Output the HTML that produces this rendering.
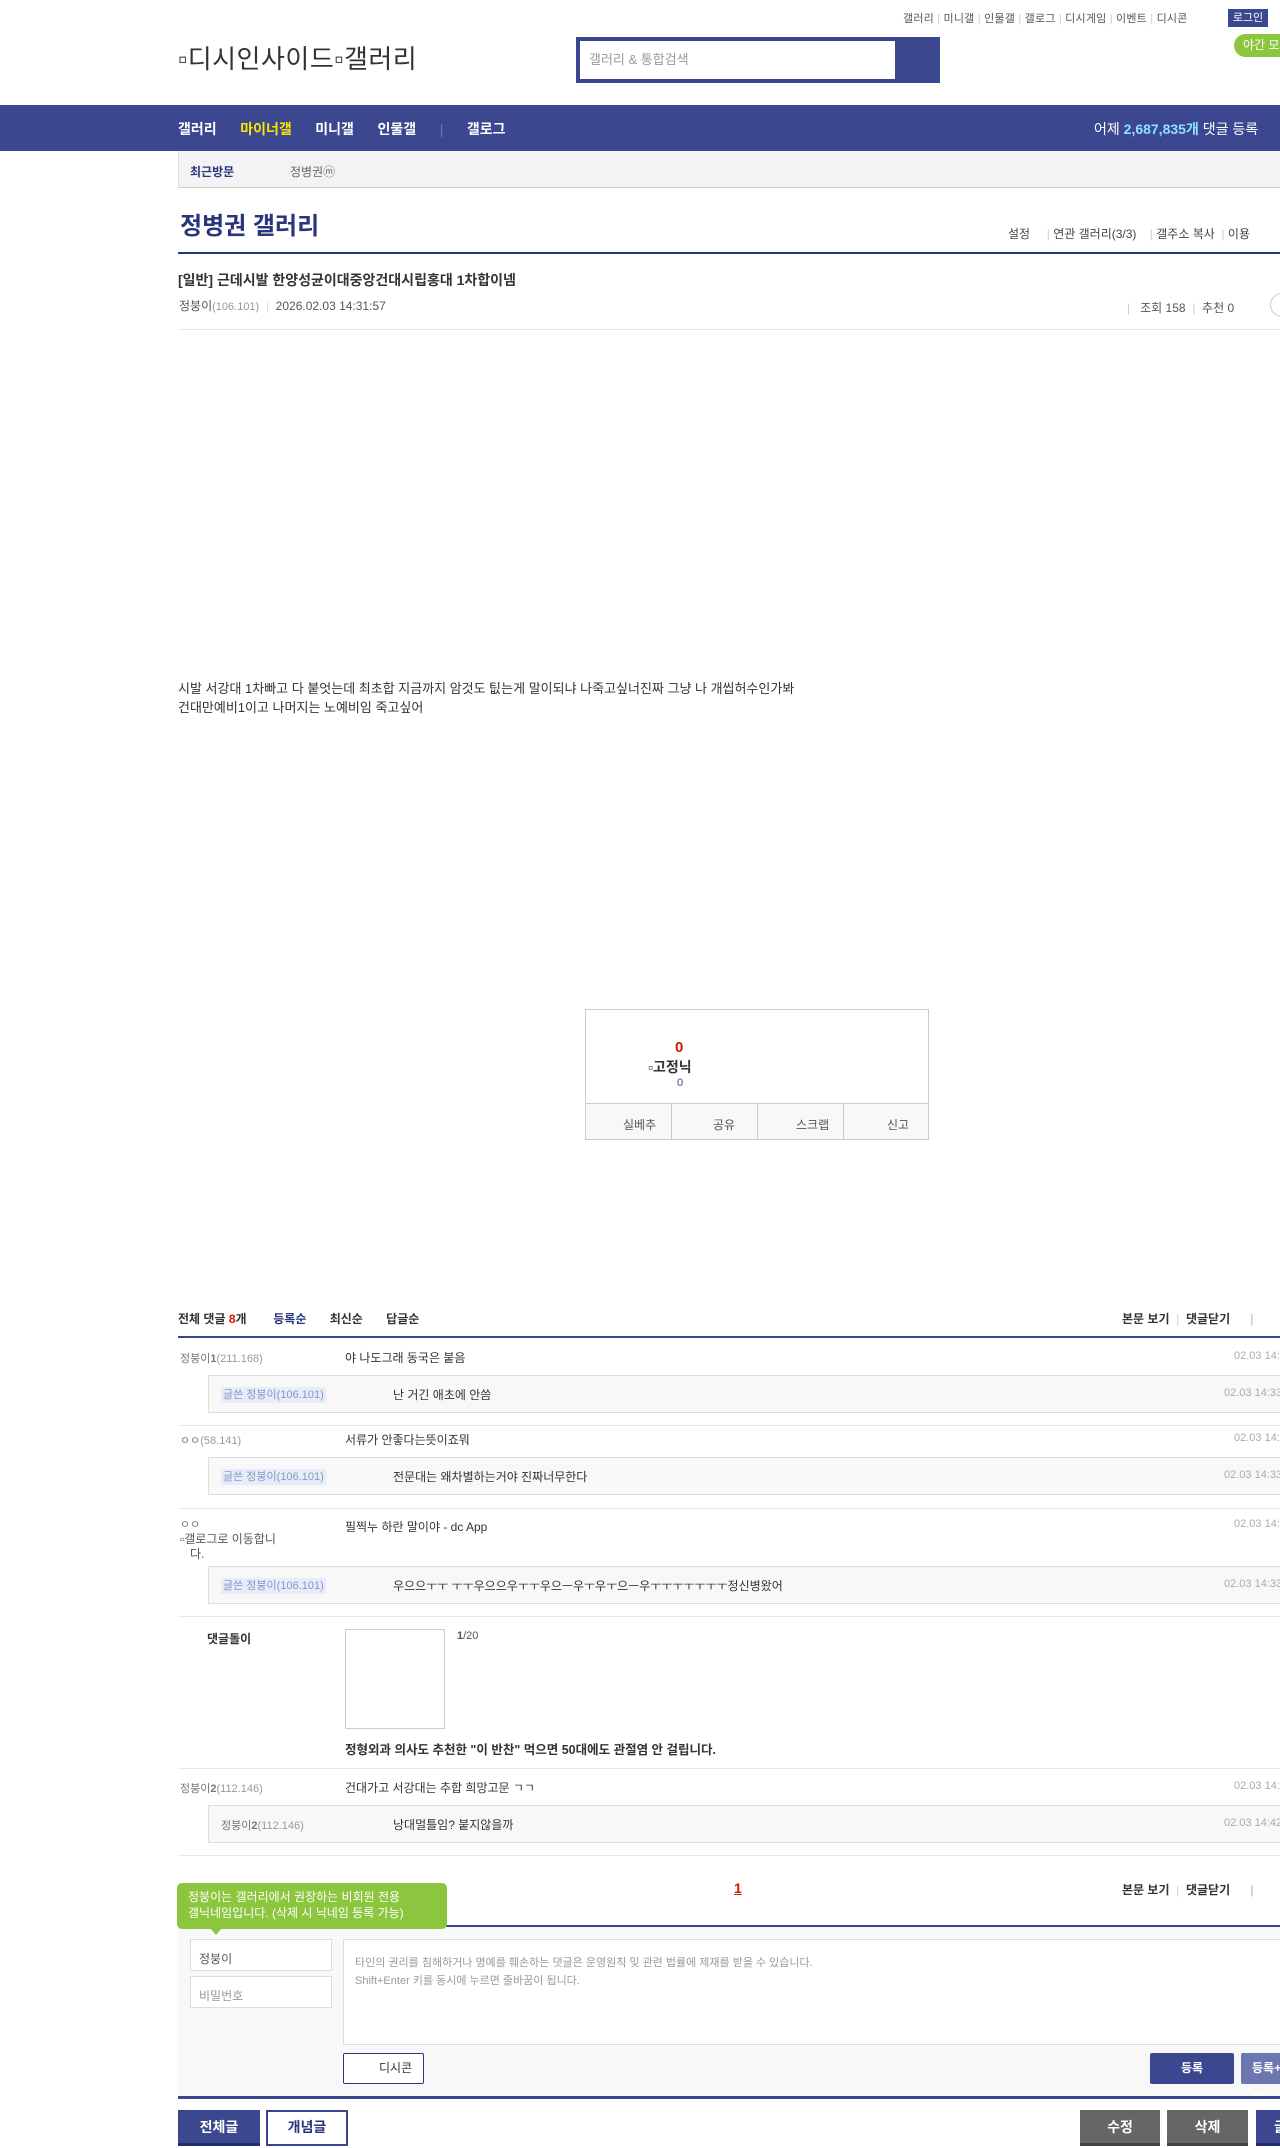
<!DOCTYPE html>
<html><head><meta charset="utf-8"><style>
*{margin:0;padding:0;box-sizing:border-box}
body{width:1280px;height:2148px;position:relative;overflow:hidden;background:#fff;font-family:"Liberation Sans","Noto Sans CJK KR",sans-serif;color:#333;font-size:12px}
.a{position:absolute;white-space:nowrap}
.g{color:#999}
.hr{position:absolute;height:1px;background:#e8e8e8;left:178px;width:1102px}
.rbox{position:absolute;left:208px;width:1072px;height:38px;background:#f8f8f9;border:1px solid #ddd;border-right:none}
.tag{background:#e6ecfa;color:#8a96bd;font-size:11px;padding:2px 2px}
.date{color:#aaa;font-size:11px}
.btn{position:absolute;height:36px;color:#fff;font-weight:bold;font-size:14px;text-align:center;line-height:34px}
</style></head><body>
<!-- top links -->
<div class="a" style="left:903px;top:10px;font-size:11px;color:#555;letter-spacing:0.2px">갤러리 <span style="color:#ccc">|</span> 미니갤 <span style="color:#ccc">|</span> 인물갤 <span style="color:#ccc">|</span> 갤로그 <span style="color:#ccc">|</span> 디시게임 <span style="color:#ccc">|</span> 이벤트 <span style="color:#ccc">|</span> 디시콘</div>
<div class="a" style="left:1228px;top:9px;width:40px;height:18px;background:#3b4890;color:#fff;font-size:11px;text-align:center;line-height:18px">로그인</div>
<div class="a" style="left:1234px;top:34px;width:60px;height:23px;background:#8cc63e;border-radius:12px;color:#fff;font-size:12px;line-height:23px;padding-left:9px">야간 모드</div>
<div class="a" style="left:178px;top:39px;font-size:26px;color:#333;letter-spacing:0.5px">▫디시인사이드▫갤러리</div>
<div class="a" style="left:576px;top:37px;width:364px;height:46px;background:#3b4890"></div>
<div class="a" style="left:580px;top:41px;width:315px;height:38px;background:#fff;color:#999;font-size:13px;line-height:38px;padding-left:9px">갤러리 &amp; 통합검색</div>
<!-- nav -->
<div class="a" style="left:0;top:105px;width:1280px;height:46px;background:#3b4890"></div>
<div class="a" style="left:178px;top:119px;font-size:14px;font-weight:bold;color:#fff;word-spacing:2px">갤러리 &nbsp;&nbsp;&nbsp;<span style="color:#ffe400">마이너갤</span>&nbsp;&nbsp;&nbsp; 미니갤 &nbsp;&nbsp;&nbsp;인물갤 &nbsp;&nbsp;&nbsp;<span style="color:#6a76b8;font-weight:normal">|</span>&nbsp;&nbsp;&nbsp; 갤로그</div>
<div class="a" style="left:1094px;top:119px;font-size:14px;color:#fff">어제 <b style="color:#8ee0ff">2,687,835개</b> 댓글 등록</div>
<!-- sub bar -->
<div class="a" style="left:178px;top:151px;width:1102px;height:37px;background:#f3f3f3;border-left:1px solid #ddd;border-bottom:1px solid #ccc"></div>
<div class="a" style="left:190px;top:163px;font-size:12px;font-weight:bold;color:#29367c">최근방문</div>
<div class="a" style="left:290px;top:163px;font-size:12px;color:#666">정병권ⓜ</div>
<!-- gallery title -->
<div class="a" style="left:180px;top:206px;font-size:24px;color:#29367c;font-weight:bold">정병권 갤러리</div>
<div class="a" style="left:1008px;top:225px;font-size:12px;color:#444">설정 &nbsp;&nbsp;&nbsp;&nbsp;<span style="color:#ccc">|</span> 연관 갤러리(3/3) &nbsp;&nbsp;&nbsp;<span style="color:#ccc">|</span> 갤주소 복사 &nbsp;<span style="color:#ccc">|</span> 이용</div>
<div class="a" style="left:178px;top:252px;width:1102px;height:2px;background:#29367c"></div>
<div class="a" style="left:178px;top:270px;font-size:14px;font-weight:bold;color:#333">[일반] 근데시발 한양성균이대중앙건대시립홍대 1차합이넴</div>
<div class="a" style="left:179px;top:297px;font-size:12px;color:#555">정붕이<span class="g" style="font-size:11px">(106.101)</span> &nbsp;<span style="color:#ddd">|</span>&nbsp; 2026.02.03 14:31:57</div>
<div class="a" style="left:1127px;top:299px;font-size:12px;color:#555"><span style="color:#ccc">|</span> &nbsp;&nbsp;조회 158 &nbsp;<span style="color:#ccc">|</span> &nbsp;추천 0</div>
<div class="a" style="left:1270px;top:293px;width:24px;height:24px;border:1px solid #ccc;border-radius:12px"></div>
<div class="hr" style="top:329px"></div>
<!-- body -->
<div class="a" style="left:178px;top:679px;font-size:13px;line-height:19px;color:#333">시발 서강대 1차빠고 다 붙엇는데 최초합 지금까지 암것도 팂는게 말이되냐 나죽고싶너진짜 그냥 나 개씹허수인가봐<br>건대만예비1이고 나머지는 노예비임 죽고싶어</div>
<!-- recommend box -->
<div class="a" style="left:585px;top:1009px;width:344px;height:131px;border:1px solid #ccc"></div>
<div class="a" style="left:585px;top:1103px;width:344px;height:37px;background:#f8f8f8;border:1px solid #ccc"></div>
<div class="a" style="left:671px;top:1103px;width:1px;height:37px;background:#ccc"></div>
<div class="a" style="left:757px;top:1103px;width:1px;height:37px;background:#ccc"></div>
<div class="a" style="left:843px;top:1103px;width:1px;height:37px;background:#ccc"></div>
<div class="a" style="left:623px;top:1116px;font-size:12px;color:#555">실베추</div>
<div class="a" style="left:713px;top:1116px;font-size:12px;color:#555">공유</div>
<div class="a" style="left:796px;top:1116px;font-size:12px;color:#555">스크랩</div>
<div class="a" style="left:887px;top:1116px;font-size:12px;color:#555">신고</div>
<div class="a" style="left:675px;top:1039px;font-size:15px;font-weight:bold;color:#d31900">0</div>
<div class="a" style="left:648px;top:1057px;font-size:14px;font-weight:bold;color:#333">▫고정닉</div>
<div class="a" style="left:677px;top:1077px;font-size:11px;color:#3b4890">0</div>
<!-- comments header -->
<div class="a" style="left:178px;top:1310px;font-size:12px;font-weight:bold;color:#333">전체 댓글 <span style="color:#d31900">8</span>개 &nbsp;&nbsp;&nbsp;&nbsp;&nbsp;&nbsp;&nbsp;<span style="color:#29367c">등록순</span> &nbsp;&nbsp;&nbsp;&nbsp;&nbsp;&nbsp;최신순 &nbsp;&nbsp;&nbsp;&nbsp;&nbsp;&nbsp;답글순</div>
<div class="a" style="left:1122px;top:1310px;font-size:12px;font-weight:bold;color:#333">본문 보기 &nbsp;<span style="color:#ccc;font-weight:normal">|</span> &nbsp;댓글닫기 &nbsp;&nbsp;&nbsp;&nbsp;&nbsp;<span style="color:#ccc">|</span></div>
<div class="a" style="left:178px;top:1336px;width:1102px;height:2px;background:#3b4890"></div>

<div class="a" style="left:180px;top:1350px;font-size:11px;color:#777">정붕이<b>1</b><span class="g">(211.168)</span></div>
<div class="a" style="left:345px;top:1349px;font-size:12px">야 나도그래 동국은 붙음</div>
<div class="a date" style="left:1234px;top:1350px">02.03 14:31</div>
<div class="rbox" style="top:1375px"></div>
<div class="a" style="left:221px;top:1386px"><span class="tag">글쓴 정붕이(106.101)</span></div>
<div class="a" style="left:393px;top:1386px;font-size:12px">난 거긴 애초에 안씀</div>
<div class="a date" style="left:1224px;top:1387px">02.03 14:33</div>
<div class="hr" style="top:1425px"></div>

<div class="a" style="left:180px;top:1432px;font-size:11px;color:#777">ㅇㅇ<span class="g">(58.141)</span></div>
<div class="a" style="left:345px;top:1431px;font-size:12px">서류가 안좋다는뜻이죠뭐</div>
<div class="a date" style="left:1234px;top:1432px">02.03 14:31</div>
<div class="rbox" style="top:1457px"></div>
<div class="a" style="left:221px;top:1468px"><span class="tag">글쓴 정붕이(106.101)</span></div>
<div class="a" style="left:393px;top:1468px;font-size:12px">전문대는 왜차별하는거야 진짜너무한다</div>
<div class="a date" style="left:1224px;top:1469px">02.03 14:33</div>
<div class="hr" style="top:1508px"></div>

<div class="a" style="left:180px;top:1518px;font-size:11px;color:#777;line-height:14px">ㅇㅇ<br><span style="color:#555;font-size:12px">▫갤로그로 이동합니<br>&nbsp;&nbsp;&nbsp;다.</span></div>
<div class="a" style="left:345px;top:1518px;font-size:12px">필찍누 하란 말이야 - dc App</div>
<div class="a date" style="left:1234px;top:1518px">02.03 14:31</div>
<div class="rbox" style="top:1566px"></div>
<div class="a" style="left:221px;top:1577px"><span class="tag">글쓴 정붕이(106.101)</span></div>
<div class="a" style="left:393px;top:1577px;font-size:12px">우으으ㅜㅜ ㅜㅜ우으으우ㅜㅜ우으ㅡ우ㅜ우ㅜ으ㅡ우ㅜㅜㅜㅜㅜㅜㅜ정신병왔어</div>
<div class="a date" style="left:1224px;top:1578px">02.03 14:33</div>
<div class="hr" style="top:1616px"></div>

<div class="a" style="left:207px;top:1630px;font-size:12px;font-weight:bold">댓글돌이</div>
<div class="a" style="left:345px;top:1629px;width:100px;height:100px;border:1px solid #ccc"></div>
<div class="a" style="left:457px;top:1630px;font-size:11px;color:#555"><b>1</b>/20</div>
<div class="a" style="left:345px;top:1739px;font-size:12.5px;font-weight:bold">정형외과 의사도 추천한 "이 반찬" 먹으면 50대에도 관절염 안 걸립니다.</div>
<div class="hr" style="top:1768px"></div>

<div class="a" style="left:180px;top:1780px;font-size:11px;color:#777">정붕이<b>2</b><span class="g">(112.146)</span></div>
<div class="a" style="left:345px;top:1779px;font-size:12px">건대가고 서강대는 추합 희망고문 ㄱㄱ</div>
<div class="a date" style="left:1234px;top:1780px">02.03 14:41</div>
<div class="rbox" style="top:1805px"></div>
<div class="a" style="left:221px;top:1817px;font-size:11px;color:#777">정붕이<b>2</b><span class="g">(112.146)</span></div>
<div class="a" style="left:393px;top:1816px;font-size:12px">낭대멀틀임? 붙지않을까</div>
<div class="a date" style="left:1224px;top:1817px">02.03 14:42</div>
<div class="hr" style="top:1855px"></div>

<!-- pagination -->
<div class="a" style="left:734px;top:1880px;font-size:14px;font-weight:bold;color:#d31900;text-decoration:underline">1</div>
<div class="a" style="left:1122px;top:1881px;font-size:12px;font-weight:bold;color:#333">본문 보기 &nbsp;<span style="color:#ccc;font-weight:normal">|</span> &nbsp;댓글닫기 &nbsp;&nbsp;&nbsp;&nbsp;&nbsp;<span style="color:#ccc">|</span></div>
<div class="a" style="left:178px;top:1925px;width:1102px;height:2px;background:#3b4890"></div>
<div class="a" style="left:178px;top:1927px;width:1102px;height:170px;background:#f8f8f8"></div>
<div class="a" style="left:177px;top:1883px;width:270px;height:46px;background:#8cc63e;border-radius:5px;color:#fff;font-size:12px;line-height:16px;padding:6px 11px">정붕이는 갤러리에서 권장하는 비회원 전용<br>갤닉네임입니다. (삭제 시 닉네임 등록 가능)</div>
<div class="a" style="left:211px;top:1929px;width:0;height:0;border-left:5px solid transparent;border-right:5px solid transparent;border-top:6px solid #8cc63e"></div>
<div class="a" style="left:190px;top:1939px;width:142px;height:32px;background:#fff;border:1px solid #ddd;padding:10px 8px;color:#555">정붕이</div>
<div class="a" style="left:190px;top:1976px;width:142px;height:32px;background:#fff;border:1px solid #ddd;padding:10px 8px;color:#999">비밀번호</div>
<div class="a" style="left:343px;top:1939px;width:950px;height:106px;background:#fff;border:1px solid #ddd;padding:14px 11px;color:#999;font-size:11px;line-height:18px">타인의 권리를 침해하거나 명예를 훼손하는 댓글은 운영원칙 및 관련 법률에 제재를 받을 수 있습니다.<br>Shift+Enter 키를 동시에 누르면 줄바꿈이 됩니다.</div>
<div class="a" style="left:343px;top:2053px;width:81px;height:31px;background:#fff;border:1px solid #29367c;border-radius:2px;color:#333;font-size:12px;line-height:29px;padding-left:35px">디시콘</div>
<div class="btn" style="left:1150px;top:2053px;width:84px;height:31px;line-height:31px;font-size:12px;background:#3b4890;border-radius:2px">등록</div>
<div class="btn" style="left:1241px;top:2053px;width:60px;height:31px;line-height:31px;font-size:12px;background:#6c77b0;border-radius:2px;text-align:left;padding-left:11px">등록+추천</div>
<div class="a" style="left:178px;top:2096px;width:1102px;height:3px;background:#3b4890"></div>
<!-- bottom buttons -->
<div class="btn" style="left:178px;top:2110px;width:82px;background:#3b4890;border-bottom:3px solid #222e6e">전체글</div>
<div class="btn" style="left:266px;top:2110px;width:82px;background:#fff;color:#29367c;border:2px solid #3b4890;line-height:30px">개념글</div>
<div class="btn" style="left:1080px;top:2110px;width:80px;background:#666;border-bottom:3px solid #444">수정</div>
<div class="btn" style="left:1167px;top:2110px;width:81px;background:#666;border-bottom:3px solid #444">삭제</div>
<div class="btn" style="left:1256px;top:2110px;width:80px;background:#3b4890;border-bottom:3px solid #222e6e;text-align:left;padding-left:18px">글쓰기</div>
</body></html>
